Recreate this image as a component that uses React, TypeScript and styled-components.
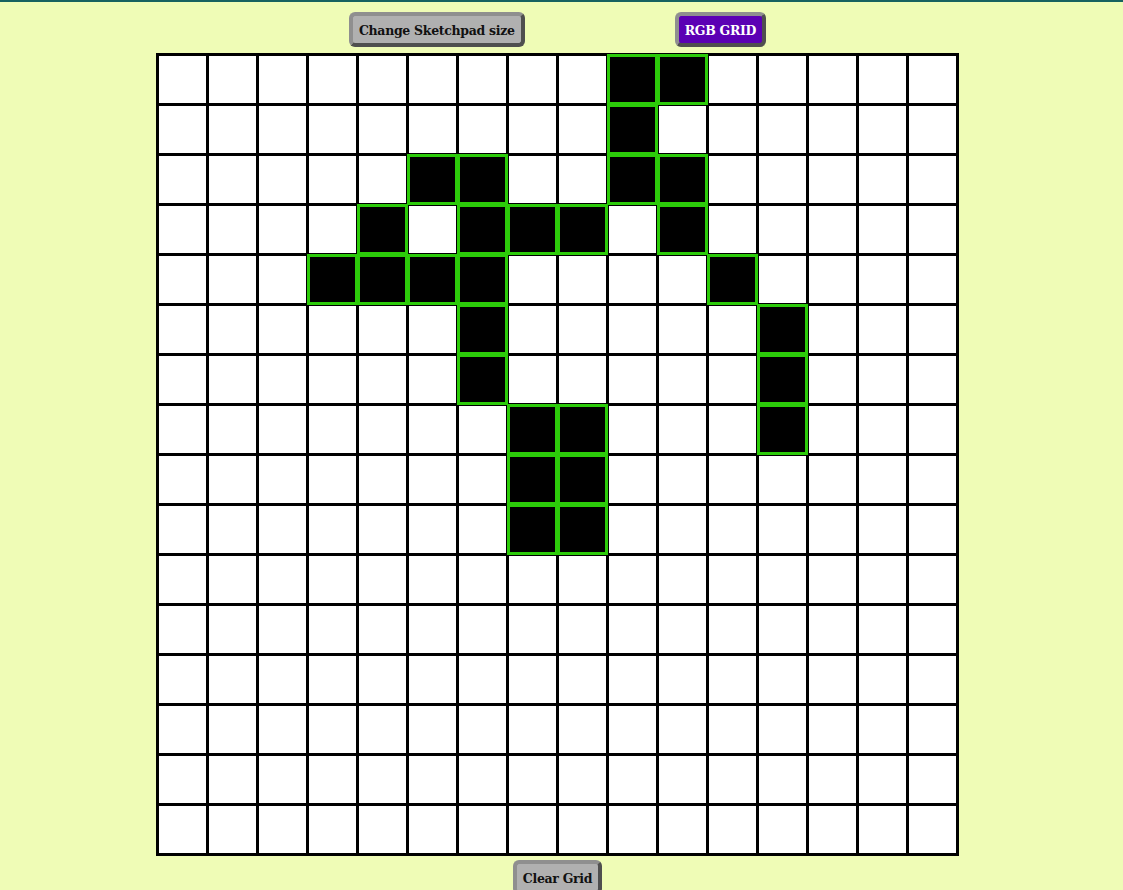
import React from "react";
import styled, { createGlobalStyle } from "styled-components";

const GlobalStyle = createGlobalStyle`
  html, body {
    margin: 0;
    padding: 0;
    background: #effcb6;
  }
  body {
    border-top: 2px solid #17625f;
    font-family: "DejaVu Serif", "Liberation Serif", serif;
  }
`;

const Page = styled.main`
  display: flex;
  flex-direction: column;
  align-items: center;
  padding: 10px 8px 0 0;
`;

const Toolbar = styled.div`
  display: flex;
  gap: 150px;
  margin-bottom: 6px;
`;

const Button = styled.button<{ $accent?: boolean }>`
  box-sizing: border-box;
  height: 35px;
  padding: 1px 6px 0;
  border-style: solid;
  border-width: 4px;
  border-color: #8f8f8f #4f4f4f #4f4f4f #8f8f8f;
  border-radius: 6px;
  background: ${(p) => (p.$accent ? "#5b00b4" : "#b0b0b0")};
  color: ${(p) => (p.$accent ? "#ffffff" : "#111111")};
  font-family: "DejaVu Serif", "Liberation Serif", serif;
  font-size: 12.5px;
  font-weight: bold;
  letter-spacing: -0.3px;
  cursor: pointer;
`;

const Grid = styled.div`
  display: grid;
  grid-template-columns: repeat(16, 47px);
  grid-auto-rows: 47px;
  gap: 3px;
  padding: 3px;
  background: #000;
`;

const Cell = styled.div<{ $on: boolean }>`
  background: ${(p) => (p.$on ? "#000" : "#fff")};
  box-shadow: ${(p) =>
    p.$on ? "0 0 0 2px #2ccb0a, inset 0 0 0 1px #2ccb0a" : "none"};
`;

const Footer = styled.div`
  display: flex;
  justify-content: center;
  margin-top: 4px;
`;

const painted: Record<number, number[]> = {
  0: [9, 10],
  1: [9],
  2: [5, 6, 9, 10],
  3: [4, 6, 7, 8, 10],
  4: [3, 4, 5, 6, 11],
  5: [6, 12],
  6: [6, 12],
  7: [7, 8, 12],
  8: [7, 8],
  9: [7, 8],
};

const cells = Array.from({ length: 256 }, (_, i) => {
  const r = Math.floor(i / 16);
  const c = i % 16;
  return (painted[r] || []).includes(c);
});

export default function App() {
  return (
    <>
      <GlobalStyle />
      <Page>
        <Toolbar>
          <Button>Change Sketchpad size</Button>
          <Button $accent>RGB GRID</Button>
        </Toolbar>
        <Grid>
          {cells.map((on, i) => (
            <Cell key={i} $on={on} />
          ))}
        </Grid>
        <Footer>
          <Button>Clear Grid</Button>
        </Footer>
      </Page>
    </>
  );
}
